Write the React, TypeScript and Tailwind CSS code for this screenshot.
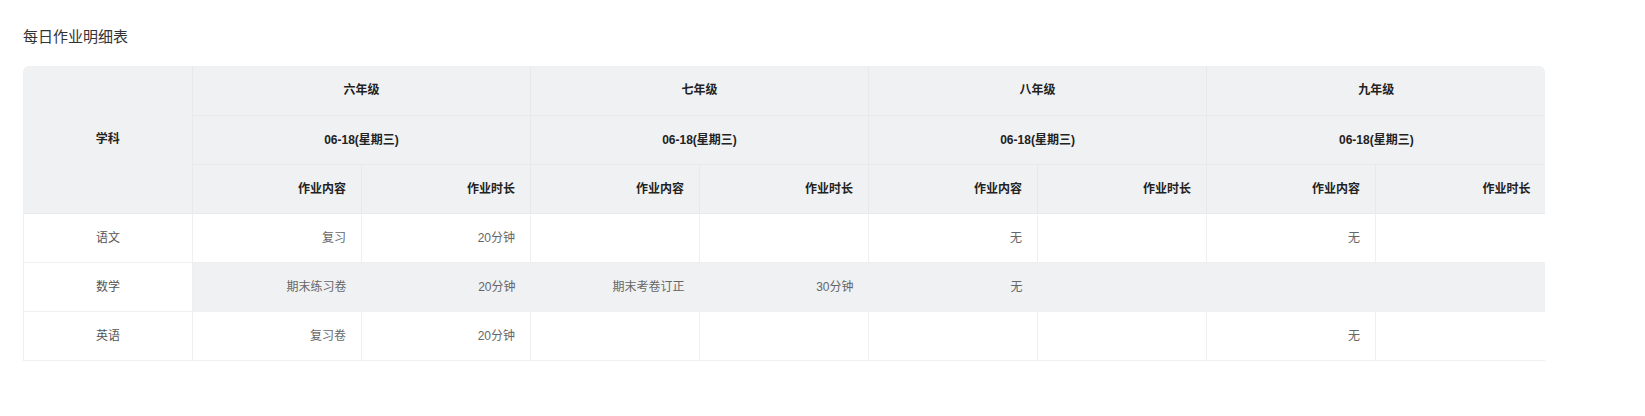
import React from "react";

const grades = ["六年级", "七年级", "八年级", "九年级"];
const rows = [
  { s: "语文", c: ["复习", "20分钟", "", "", "无", "", "无", ""] },
  { s: "数学", c: ["期末练习卷", "20分钟", "期末考卷订正", "30分钟", "无", "", "", ""] },
  { s: "英语", c: ["复习卷", "20分钟", "", "", "", "", "无", ""] },
];

export default function App() {
  const th = "border-r border-b border-[#e8e9eb] text-[12px] font-bold text-[#222] h-[49px] p-0";
  return (
    <div className="w-full h-[416px] overflow-hidden bg-white px-[23px] pt-[26px]" style={{ fontFamily: '"Liberation Sans", "Noto Sans CJK SC", sans-serif' }}>
      <div className="text-[15px] text-[#333] leading-[22px]">每日作业明细表</div>
      <div className="mt-[18px] w-[1522px] rounded-t-[6px] overflow-hidden bg-[#f0f1f3]">
        <table className="w-[1522px] table-fixed border-collapse">
          <colgroup>
            {Array.from({ length: 9 }).map((_, i) => (
              <col key={i} className={i === 8 ? "w-[170px]" : "w-[169px]"} />
            ))}
          </colgroup>
          <thead>
            <tr>
              <th rowSpan={3} className={th + " text-center"}>学科</th>
              {grades.map((g, i) => (
                <th key={g} colSpan={2} className={th + " text-center" + (i === 3 ? " border-r-0" : "")}>{g}</th>
              ))}
            </tr>
            <tr>
              {grades.map((g, i) => (
                <th key={g} colSpan={2} className={th + " text-center" + (i === 3 ? " border-r-0" : "")}>06-18(星期三)</th>
              ))}
            </tr>
            <tr>
              {Array.from({ length: 8 }).map((_, i) => (
                <th key={i} className={th + " text-right pr-[15px]" + (i === 7 ? " border-r-0" : "")}>{i % 2 === 0 ? "作业内容" : "作业时长"}</th>
              ))}
            </tr>
          </thead>
          <tbody>
            {rows.map((r, ri) => (
              <tr key={r.s} className={ri === 1 ? "bg-[#f0f1f3]" : "bg-white"}>
                <td className="h-[49px] text-center text-[12px] text-[#555] border border-[#eeeff1] bg-white">{r.s}</td>
                {r.c.map((v, i) => (
                  <td key={i} className={"h-[49px] text-right pr-[15px] text-[12px] text-[#666] border-b " + (ri === 1 ? "border-[#f0f1f3]" : "border-[#eeeff1] border-r")}>{v}</td>
                ))}
              </tr>
            ))}
          </tbody>
        </table>
      </div>
    </div>
  );
}
